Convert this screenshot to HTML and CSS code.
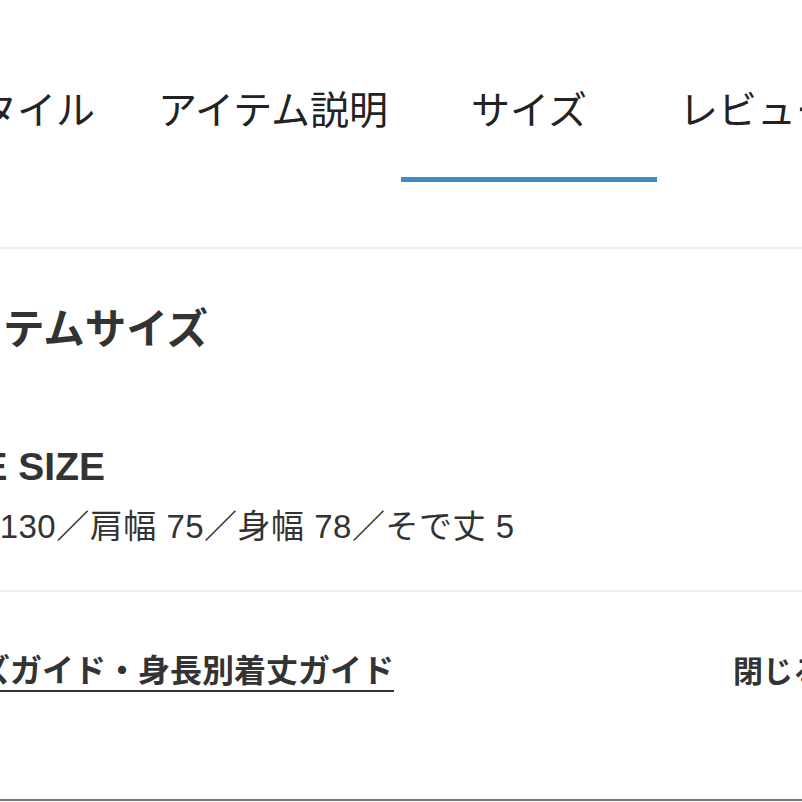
FILE: index.html
```html
<!DOCTYPE html>
<html lang="ja">
<head>
<meta charset="utf-8">
<title>サイズ</title>
<link rel="stylesheet" href="styles.css">
</head>
<body>
<div class="tabbar">
  <nav class="tabs">
    <div class="tab">スタイル</div>
    <div class="tab">アイテム説明</div>
    <div class="tab active">サイズ</div>
    <div class="tab tab-last">レビュー</div>
  </nav>
</div>
<div class="page">
  <main class="content">
    <h2 class="title">アイテムサイズ</h2>
    <div class="size-name">ONE SIZE</div>
    <p class="size-detail">着丈 130／肩幅 75／身幅 78／そで丈 5</p>
  </main>
</div>
<div class="divider"></div>
<div class="page">
  <div class="content guide-row">
    <a class="guide-link">サイズガイド・身長別着丈ガイド</a>
    <span class="close">閉じる
      <svg class="close-icon" viewBox="0 0 24 24" width="24" height="24"><path d="M5 15l7-7 7 7" fill="none" stroke="#333" stroke-width="2.5"/></svg>
    </span>
  </div>
</div>
<div class="bottom-line"></div>
</body>
</html>
```
FILE: styles.css
```css
html, body {
  margin: 0;
  padding: 0;
  background: #fff;
}
body {
  width: 802px;
  height: 802px;
  overflow: hidden;
  font-family: "Liberation Sans", "Noto Sans CJK JP", sans-serif;
  color: #222;
  display: flex;
  flex-direction: column;
}
.tabbar {
  padding-top: 91px;
  padding-bottom: 65px;
  border-bottom: 2px solid #efefef;
}
.tabs {
  display: flex;
  justify-content: center;
}
.tab {
  flex: none;
  width: 256px;
  box-sizing: border-box;
  text-align: center;
  font-size: 39px;
  line-height: 39px;
  padding-bottom: 47px;
  border-bottom: 5px solid transparent;
  color: #222;
  white-space: nowrap;
}
.tab.active {
  border-bottom-color: #3b8ec2;
}
.tab-last {
  text-align: left;
  padding-left: 22px;
}
.page {
  display: flex;
  justify-content: center;
}
.content {
  flex: none;
  width: 956px;
  box-sizing: border-box;
}
.title {
  margin: 60px 0 0;
  font-size: 41.5px;
  line-height: 42px;
  font-weight: bold;
  color: #333;
  white-space: nowrap;
}
.size-name {
  margin-top: 96px;
  font-size: 39px;
  line-height: 39px;
  font-weight: bold;
  color: #333;
}
.size-detail {
  margin: 25px 0 0;
  font-size: 33px;
  line-height: 32px;
  letter-spacing: 0.5px;
  color: #333;
  white-space: nowrap;
  padding-bottom: 47px;
}
.divider {
  height: 2px;
  background: #efefef;
}
.guide-row {
  display: flex;
  justify-content: space-between;
  align-items: flex-start;
  padding-top: 64px;
  padding-right: 24px;
  height: 207px;
}
.guide-link {
  display: inline-block;
  margin-left: -8px;
  font-size: 32px;
  line-height: 31px;
  font-weight: bold;
  color: #333;
  padding-bottom: 3px;
  border-bottom: 2px solid #333;
  white-space: nowrap;
}
.close {
  display: flex;
  align-items: center;
  gap: 8px;
  font-size: 30px;
  line-height: 31px;
  font-weight: bold;
  color: #333;
  white-space: nowrap;
}
.close-icon {
  display: block;
}
.bottom-line {
  height: 2px;
  background: #777;
}
```
